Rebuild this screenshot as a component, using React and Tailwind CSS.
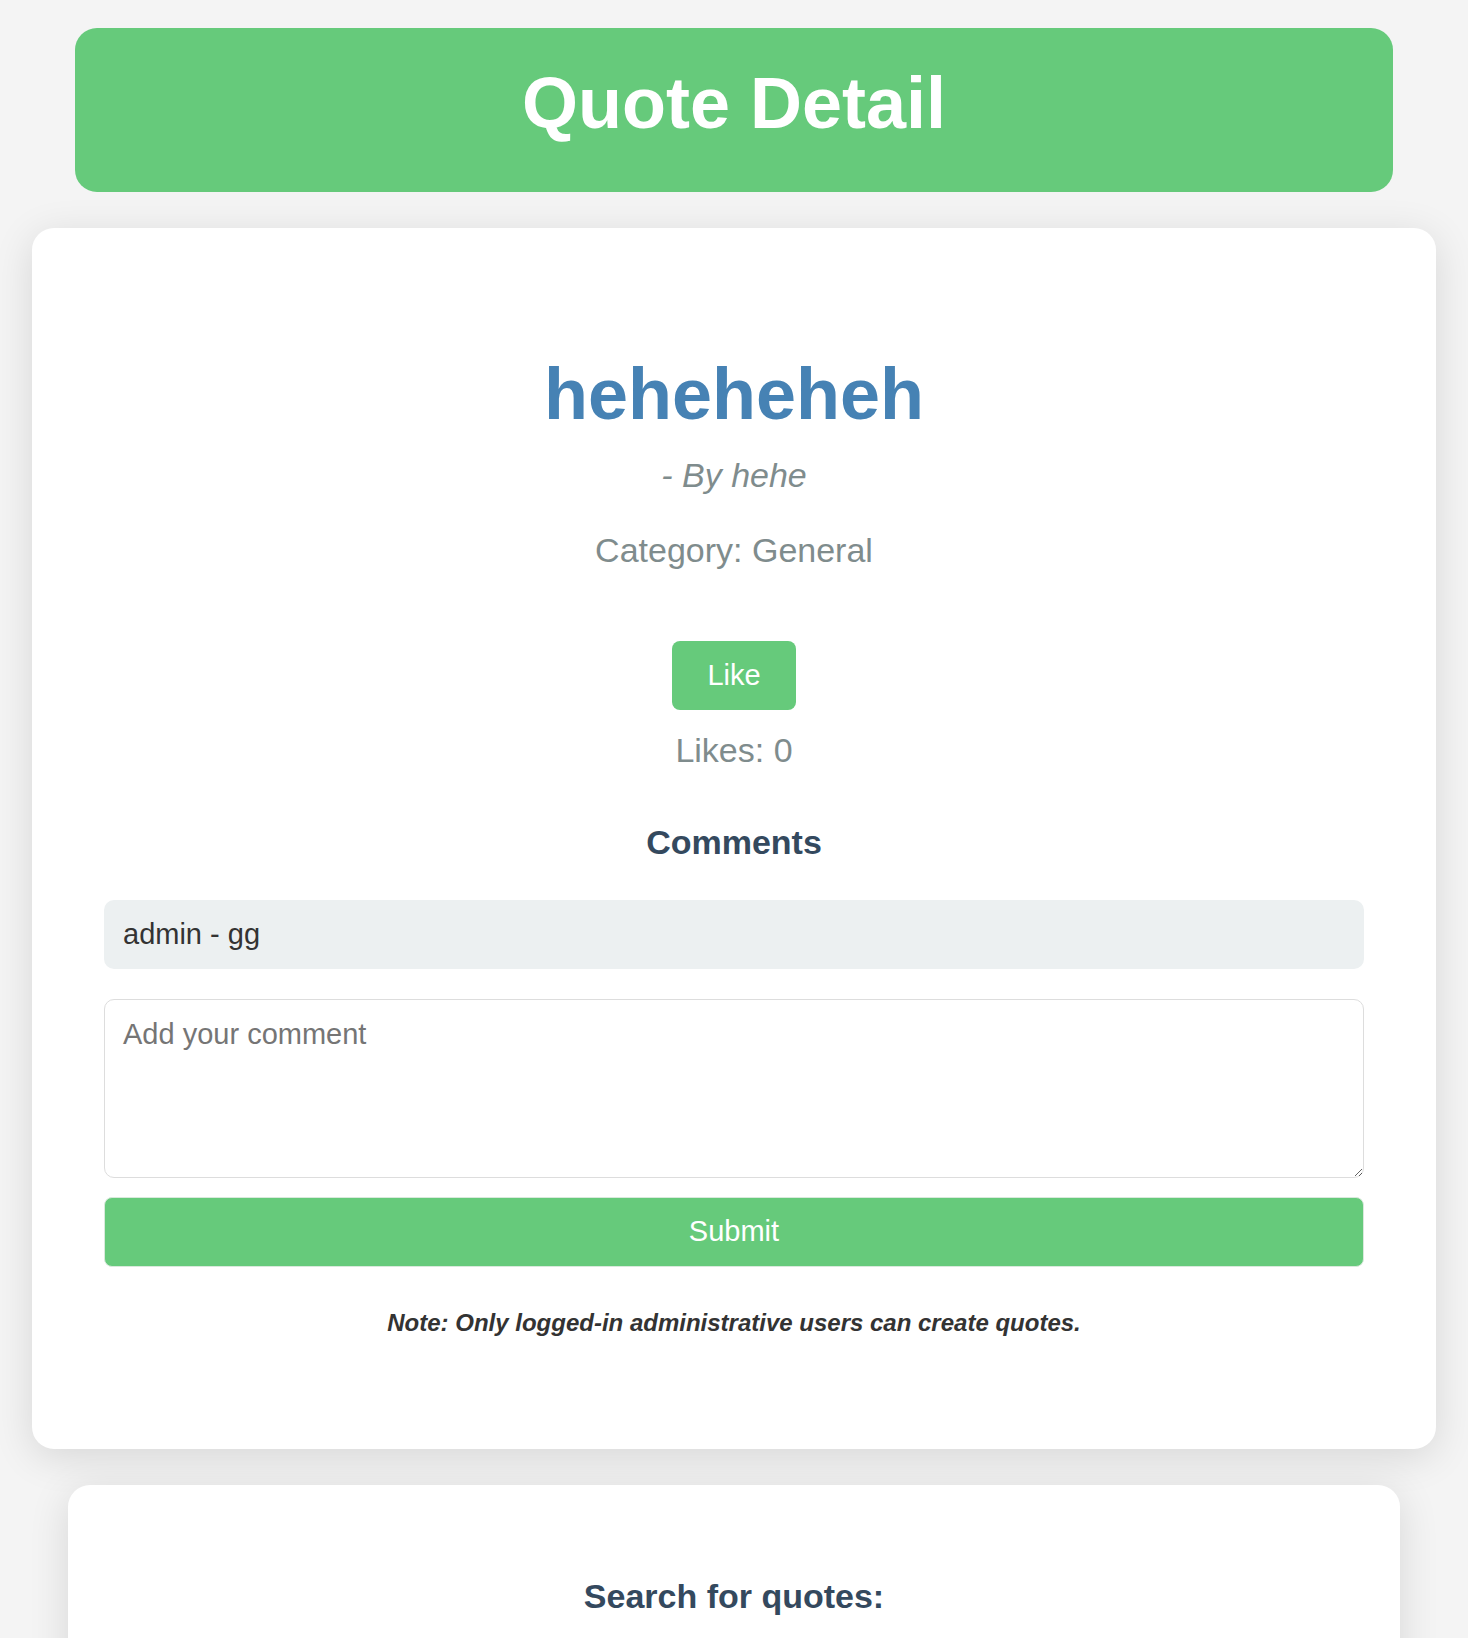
import React, { useState } from 'react';

const font = { fontFamily: '"Liberation Sans", Arial, Helvetica, sans-serif' };

export default function App() {
    const [likes, setLikes] = useState(0);
    const [comment, setComment] = useState('');

    return (
        <div
            className="min-h-screen bg-[#f4f4f4] text-[#333] pt-[28px] pb-[40px]"
            style={font}
        >
            {/* Header */}
            <header className="mx-[75px] h-[164px] rounded-[22px] bg-[#66ca7b] pt-[34px]">
                <h1 className="text-center text-[72px] leading-[83px] font-bold text-white">
                    Quote Detail
                </h1>
            </header>

            {/* Quote card */}
            <main className="mx-[32px] mt-[36px] rounded-[22px] bg-white px-[72px] pt-[126px] pb-[112px] shadow-[0_8px_40px_rgba(0,0,0,0.12)]">
                <div className="flex flex-col items-center text-center">
                    <h2 className="text-[72px] leading-[80px] font-bold text-[#4682b4]">heheheheh</h2>
                    <p className="mt-[21px] text-[34px] leading-[40px] italic text-[#7f8c8d]">- By hehe</p>
                    <p className="mt-[35px] text-[34px] leading-[40px] text-[#7f8c8d]">Category: General</p>

                    <button
                        onClick={() => setLikes(likes + 1)}
                        className="mt-[71px] flex h-[69px] w-[124px] items-center justify-center rounded-[8px] bg-[#66ca7b] text-[29px] text-white"
                    >
                        Like
                    </button>
                    <p className="mt-[20px] text-[34px] leading-[40px] text-[#7f8c8d]">Likes: {likes}</p>

                    <h3 className="mt-[52px] text-[34px] leading-[40px] font-bold text-[#34495e]">Comments</h3>
                </div>

                <div className="mt-[38px] flex h-[69px] items-center rounded-[10px] bg-[#ecf0f1] px-[19px] text-[29px] text-[#333]">
                    admin - gg
                </div>

                <textarea
                    value={comment}
                    onChange={(e) => setComment(e.target.value)}
                    placeholder="Add your comment"
                    className="mt-[30px] block h-[179px] w-full rounded-[10px] border border-[#dddddd] bg-white p-[18px] text-[29px] leading-[33px] text-[#333] placeholder:text-[#757575] outline-none"
                    style={font}
                />

                <button className="mt-[19px] flex h-[70px] w-full items-center justify-center rounded-[8px] border border-[#d9e9dc] bg-[#66ca7b] text-[29px] text-white">
                    Submit
                </button>

                <p className="mt-[42px] text-center text-[24px] leading-[28px] font-bold italic text-[#333]">
                    Note: Only logged-in administrative users can create quotes.
                </p>
            </main>

            {/* Search card */}
            <section className="mx-[68px] mt-[36px] rounded-[22px] bg-white px-[72px] pt-[91px] pb-[120px] shadow-[0_8px_40px_rgba(0,0,0,0.12)]">
                <h3 className="text-center text-[34px] leading-[40px] font-bold text-[#34495e]">Search for quotes:</h3>
            </section>
        </div>
    );
}
